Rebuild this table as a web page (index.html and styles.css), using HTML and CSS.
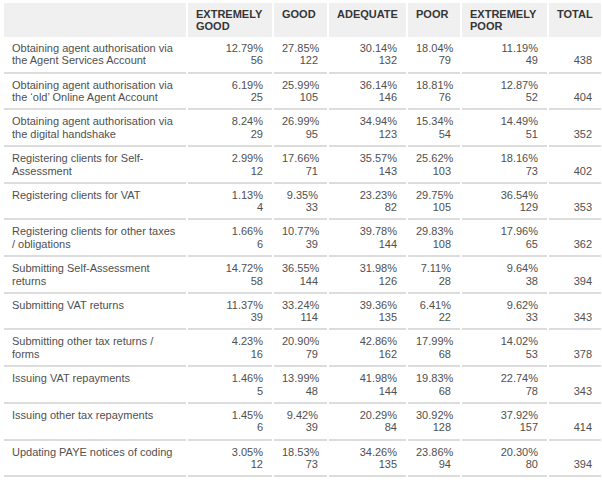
FILE: index.html
```html
<!DOCTYPE html>
<html>
<head>
<meta charset="utf-8">
<link rel="stylesheet" href="styles.css">
</head>
<body>
<table class="grid">
  <colgroup>
    <col class="c-label"><col class="c-eg"><col class="c-good"><col class="c-adq"><col class="c-poor"><col class="c-ep"><col class="c-total">
  </colgroup>
  <thead>
    <tr>
      <th></th><th>EXTREMELY GOOD</th><th>GOOD</th><th>ADEQUATE</th><th>POOR</th><th>EXTREMELY POOR</th><th>TOTAL</th>
    </tr>
  </thead>
  <tbody>
    <tr><td class="label">Obtaining agent authorisation via the Agent Services Account</td><td class="num">12.79%<br>56</td><td class="num">27.85%<br>122</td><td class="num">30.14%<br>132</td><td class="num">18.04%<br>79</td><td class="num">11.19%<br>49</td><td class="num total">438</td></tr>
    <tr><td class="label">Obtaining agent authorisation via the ‘old’ Online Agent Account</td><td class="num">6.19%<br>25</td><td class="num">25.99%<br>105</td><td class="num">36.14%<br>146</td><td class="num">18.81%<br>76</td><td class="num">12.87%<br>52</td><td class="num total">404</td></tr>
    <tr><td class="label">Obtaining agent authorisation via the digital handshake</td><td class="num">8.24%<br>29</td><td class="num">26.99%<br>95</td><td class="num">34.94%<br>123</td><td class="num">15.34%<br>54</td><td class="num">14.49%<br>51</td><td class="num total">352</td></tr>
    <tr><td class="label">Registering clients for Self-Assessment</td><td class="num">2.99%<br>12</td><td class="num">17.66%<br>71</td><td class="num">35.57%<br>143</td><td class="num">25.62%<br>103</td><td class="num">18.16%<br>73</td><td class="num total">402</td></tr>
    <tr><td class="label">Registering clients for VAT</td><td class="num">1.13%<br>4</td><td class="num">9.35%<br>33</td><td class="num">23.23%<br>82</td><td class="num">29.75%<br>105</td><td class="num">36.54%<br>129</td><td class="num total">353</td></tr>
    <tr><td class="label">Registering clients for other taxes / obligations</td><td class="num">1.66%<br>6</td><td class="num">10.77%<br>39</td><td class="num">39.78%<br>144</td><td class="num">29.83%<br>108</td><td class="num">17.96%<br>65</td><td class="num total">362</td></tr>
    <tr><td class="label">Submitting Self-Assessment returns</td><td class="num">14.72%<br>58</td><td class="num">36.55%<br>144</td><td class="num">31.98%<br>126</td><td class="num">7.11%<br>28</td><td class="num">9.64%<br>38</td><td class="num total">394</td></tr>
    <tr><td class="label">Submitting VAT returns</td><td class="num">11.37%<br>39</td><td class="num">33.24%<br>114</td><td class="num">39.36%<br>135</td><td class="num">6.41%<br>22</td><td class="num">9.62%<br>33</td><td class="num total">343</td></tr>
    <tr><td class="label">Submitting other tax returns / forms</td><td class="num">4.23%<br>16</td><td class="num">20.90%<br>79</td><td class="num">42.86%<br>162</td><td class="num">17.99%<br>68</td><td class="num">14.02%<br>53</td><td class="num total">378</td></tr>
    <tr><td class="label">Issuing VAT repayments</td><td class="num">1.46%<br>5</td><td class="num">13.99%<br>48</td><td class="num">41.98%<br>144</td><td class="num">19.83%<br>68</td><td class="num">22.74%<br>78</td><td class="num total">343</td></tr>
    <tr><td class="label">Issuing other tax repayments</td><td class="num">1.45%<br>6</td><td class="num">9.42%<br>39</td><td class="num">20.29%<br>84</td><td class="num">30.92%<br>128</td><td class="num">37.92%<br>157</td><td class="num total">414</td></tr>
    <tr><td class="label">Updating PAYE notices of coding</td><td class="num">3.05%<br>12</td><td class="num">18.53%<br>73</td><td class="num">34.26%<br>135</td><td class="num">23.86%<br>94</td><td class="num">20.30%<br>80</td><td class="num total">394</td></tr>
  </tbody>
</table>
</body>
</html>
```
FILE: styles.css
```css
html, body {
  margin: 0;
  padding: 0;
  background: #ffffff;
  overflow: hidden;
}
body {
  padding: 3px 0 0 2px;
  font-family: "Liberation Sans", Arial, sans-serif;
  font-size: 11px;
  line-height: 12.5px;
  color: #505050;
}
.grid {
  border-collapse: separate;
  border-spacing: 2px 0;
  table-layout: fixed;
  width: 601px;
}
.c-label { width: 182px; }
.c-eg { width: 84px; }
.c-good { width: 53px; }
.c-adq { width: 77px; }
.c-poor { width: 52px; }
.c-ep { width: 85px; }
.c-total { width: 52px; }
.grid th {
  background: #f0f0f0;
  color: #363636;
  font-weight: bold;
  text-align: left;
  vertical-align: top;
  padding: 4.7px 6px 4.3px 8px;
  height: 25px;
  box-sizing: content-box;
}
.grid td {
  border-bottom: 2px solid #dcdcdc;
  padding: 5px 9px 4.7px 8px;
  vertical-align: top;
}
.grid td.label {
  text-align: left;
}
.grid td.num {
  text-align: right;
  white-space: nowrap;
}
.grid td.total {
  vertical-align: bottom;
}
```
